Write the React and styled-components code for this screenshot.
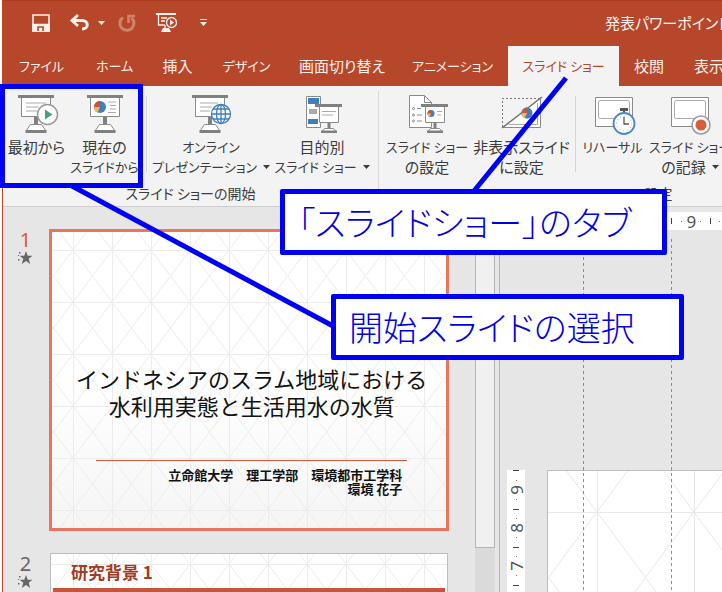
import React from 'react';
import styled, { createGlobalStyle } from 'styled-components';

const GlobalStyle = createGlobalStyle`
    * {
        box-sizing: border-box;
    }

    body {
        margin: 0;
        background: #fff;
        font-family: "Noto Sans CJK JP", "Noto Sans", sans-serif;
    }

    button {
        border: 0;
        padding: 0;
        background: none;
        color: inherit;
        font: inherit;
    }

    svg {
        display: block;
        overflow: visible;
    }
`

const Page = styled.div`
    position: relative;
    height: 100vh;
    overflow: hidden;
`

const Window = styled.div`
    display: flex;
    flex-direction: column;
    height: 100%;
    margin-left: 2px;
    border-left: 1px solid #b7472a;
    background: #e6e6e6;
    font-feature-settings: "palt";
`

const Header = styled.header`
    flex: none;
    overflow: hidden;
    border-top: 1px solid #b03a1e;
    background: #b7472a;
    color: #fdf1ec;
`

const TitleBar = styled.div`
    display: flex;
    align-items: center;
    height: 45px;
    padding: 0 0 2px 18px;
`

const QuickButton = styled.button`
    display: flex;
    flex: none;
    align-items: center;
    justify-content: center;
    width: ${({ $width }) => $width}px;
    height: 32px;
    opacity: ${({ disabled }) => (disabled ? 0.35 : 1)};
`

const FileName = styled.span`
    flex: none;
    width: 117px;
    margin-left: auto;
    font-size: 15px;
    white-space: nowrap;
`

const Tabs = styled.nav`
    display: flex;
    height: 40px;
`

const Tab = styled.button`
    flex: none;
    width: ${({ $width }) => $width}px;
    padding-bottom: 2px;
    background: ${({ $active }) => ($active ? '#f3f3f3' : 'none')};
    color: ${({ $active }) => ($active ? '#b7472a' : 'inherit')};
    font-size: ${({ $small }) => ($small ? 13 : 15)}px;
    white-space: nowrap;
`

const Ribbon = styled.div`
    display: flex;
    flex: none;
    height: 121px;
    padding: 5px 0 2px;
    overflow: hidden;
    border-bottom: 1px solid #cfcfcf;
    background: #f3f3f3;
    color: #3c3c3c;
`

const Group = styled.section`
    display: flex;
    flex: none;
    flex-direction: column;
    width: ${({ $width }) => $width}px;
    border-right: 1px solid #d8d8d8;
`

const GroupBody = styled.div`
    display: flex;
    flex: 1;
`

const GroupName = styled.div`
    height: 20px;
    font-size: 14px;
    line-height: 18px;
    text-align: center;
`

const Separator = styled.div`
    flex: none;
    width: 1px;
    height: 76px;
    margin: 5px 6px 0 7px;
    background: #d4d4d4;
`

const Command = styled.button`
    display: flex;
    flex: none;
    flex-direction: column;
    align-items: center;
    width: ${({ $width }) => $width}px;
    padding-top: 2px;
`

const CommandLine = styled.span`
    display: flex;
    align-items: center;
    gap: 6px;
    height: 20px;
    font-size: ${({ $small }) => ($small ? 13 : 15)}px;
    line-height: 20px;
    white-space: nowrap;
`

const IconBox = styled.span`
    height: 44px;
`

const Workspace = styled.main`
    display: flex;
    flex: 1;
    min-height: 0;
    overflow: hidden;
`

const ThumbnailPane = styled.aside`
    display: flex;
    flex: none;
    flex-direction: column;
    gap: 22px;
    width: 472px;
    padding: 22px 26px 0 9px;
`

const ThumbnailRow = styled.div`
    display: grid;
    flex: none;
    grid-template-columns: 27px 400px;
    gap: 10px;
`

const SlideMark = styled.div`
    display: flex;
    flex-direction: column;
    align-items: center;
    color: ${({ $active }) => ($active ? '#d9583b' : '#666')};
    font-family: "Noto Sans", sans-serif;
    font-size: 20px;
    line-height: 22px;
`

const Thumbnail = styled.div`
    display: grid;
    height: 302px;
    margin: ${({ $active }) => ($active ? '0' : '0 1px')};
    overflow: hidden;
    border: ${({ $active }) => ($active ? '3px solid #e7765a' : '1px solid #bdbdbd')};
    background: linear-gradient(#fff 50%, #f5f5f5);
    font-feature-settings: normal;

    > * {
        grid-area: 1 / 1;
    }
`

const CoverText = styled.div`
    padding: 133px 41px 0 24px;
    color: #111;
`

const CoverTitle = styled.h1`
    margin: 0 -20px 0 0;
    font-size: 22px;
    font-weight: 400;
    line-height: 27px;
    text-align: center;
    white-space: nowrap;
`

const Author = styled.p`
    margin: 41px 0 0 20px;
    padding: 7px 5px 0 0;
    border-top: 1px solid #c8583c;
    font-size: 13px;
    font-weight: 700;
    line-height: 14px;
    text-align: right;
    white-space: nowrap;
`

const SlideHeading = styled.h2`
    align-self: start;
    height: 38px;
    margin: 0 2px;
    padding: 0 18px;
    border-bottom: 4px solid #c8553a;
    color: #a23b22;
    font-size: 17px;
    font-weight: 700;
    line-height: 36px;
`

const ScrollTrack = styled.div`
    flex: none;
    width: 20px;
    background: #dadada;
`

const ScrollThumb = styled.div`
    height: 341px;
    border: 1px solid #b4b4b4;
    background: #f0f0f0;
`

const Editor = styled.div`
    position: relative;
    display: grid;
    flex: 1;
    grid-template-rows: 18px 1fr;
    min-width: 0;
    margin-left: 4px;
    padding-top: 5px;
    border-left: 1px solid #b4b4b4;
`

const Ruler = styled.div`
    display: flex;
    flex-direction: ${({ $vertical }) => ($vertical ? 'column' : 'row')};
    overflow: hidden;
    background: #fff;
    color: #555;
    font-family: "Noto Sans", sans-serif;
    font-size: 17px;
    line-height: 18px;
`

const TopRuler = styled(Ruler)`
    margin-left: 48px;
    padding-left: 123px;
`

const RulerUnit = styled.div`
    display: grid;
    flex: none;
    grid-template-columns: ${({ $vertical }) => ($vertical ? '18px' : 'repeat(4, minmax(0, 1fr))')};
    grid-template-rows: ${({ $vertical }) => ($vertical ? 'repeat(4, minmax(0, 1fr))' : '18px')};
    place-items: center;
    width: ${({ $vertical }) => ($vertical ? 18 : 38)}px;
    height: ${({ $vertical }) => ($vertical ? 38 : 18)}px;
`

const RulerNumber = styled.span`
    line-height: 1;
    writing-mode: ${({ $vertical }) => ($vertical ? 'sideways-lr' : 'horizontal-tb')};
`

const Tick = styled.i`
    flex: none;
    align-self: center;
    width: ${({ $vertical }) => ($vertical ? 6 : 1)}px;
    height: ${({ $vertical }) => ($vertical ? 1 : 6)}px;
    background: #444;
`

const FirstTick = styled(Tick)`
    margin: ${({ $vertical }) => ($vertical ? '0 0 5px' : '0 5px 0 0')};
`

const Dot = styled.i`
    width: 1px;
    height: 1px;
    background: #777;
`

const Canvas = styled.div`
    display: grid;
    grid-template-columns: 18px 1fr;
    gap: 22px;
    padding: 240px 0 0 7px;
    overflow: hidden;
`

const Slide = styled.div`
    overflow: hidden;
    border: 1px solid #bdbdbd;
    border-width: 1px 0 0 1px;
    background: #fff;
`

const Guide = styled.div`
    position: absolute;
    top: 32px;
    bottom: 0;
    left: ${({ $left }) => $left}px;
    width: 1px;
    background: repeating-linear-gradient(#8c8c8c 0 3px, transparent 3px 6px);
`

const Marker = styled.div`
    position: absolute;
    top: 84px;
    left: 0;
    width: 143px;
    height: 104px;
    border: 5px solid #0000f5;
`

const Leaders = styled.svg`
    position: absolute;
    inset: 0;
    width: 100%;
    height: 100%;
    pointer-events: none;
`

const Callout = styled.div`
    position: absolute;
    top: ${({ $top }) => $top}px;
    left: ${({ $left }) => $left}px;
    width: ${({ $width }) => $width}px;
    height: 66px;
    padding-left: 13px;
    border: 5px solid #0000f5;
    border-radius: 2px;
    background: #fff;
    color: #0000e0;
    font-feature-settings: "palt";
    font-size: 34px;
    font-weight: 300;
    line-height: 56px;
    white-space: nowrap;
`

function Caret() {
    return (
        <svg width="7" height="4" viewBox="0 0 7 4" fill="currentColor">
            <path d="M0 0H7L3.500 4Z" />
        </svg>
    );
}

function Star() {
    return (
        <svg width="15" height="14" viewBox="0 0 15 14" fill="#666">
            <path d="M8 0L9.700 4.800H14.500L10.700 7.800L12.200 13L8 10L3.800 13L5.300 7.800L1.600 4.800H6.300Z" />
            <path d="M1 1h1.500v1.500h-1.500zM0 4h1v1h-1zM0 8h1.500v1.500h-1.500z" />
        </svg>
    );
}

function Lattice({ id, width, height, x, y, color }) {
    return (
        <svg width="100%" height="100%">
            <defs>
                <pattern id={ id } x={ x } y={ y } width={ width } height={ height } patternUnits="userSpaceOnUse">
                    <path
                        d={ `M0 .5H${width}M.5 0V${height}M0 0L${width} ${height}M${width} 0L0 ${height}` }
                        stroke={ color }
                        fill="none"
                    />
                </pattern>
            </defs>
            <rect width="100%" height="100%" fill={ `url(#${id})` } />
        </svg>
    );
}

/* projector screen on a stand, 36 x 39 */
function Screen({ x, children }) {
    return (
        <g transform={ `translate(${x} 2)` }>
            <path d="M3.500 2V21.500H32.500V2" fill="#fff" stroke="#8a8a8a" />
            <path d="M0 0H36V3H0Z" fill="#808080" />
            <path d="M16 22H20V30H16Z" fill="#808080" />
            <path d="M12.500 29.500H23.500L28 36H8Z" fill="#fff" stroke="#8a8a8a" />
            <path d="M7.500 35H28.500V38H7.500Z" fill="#808080" />
            { children }
        </g>
    );
}

function SmallScreen({ x, children }) {
    return (
        <g transform={ `translate(${x} 11)` }>
            <path d="M4.500 2V18.500H23.500V2" fill="#fff" stroke="#8a8a8a" />
            <path d="M0 0H27V3H0Z" fill="#808080" />
            <path d="M12.500 19H15.500V25H12.500Z" fill="#808080" />
            <path d="M9.500 24.500H18.500L21.500 28H6.500Z" fill="#fff" stroke="#8a8a8a" />
            <path d="M6 26.500H22V29H6Z" fill="#808080" />
            { children }
        </g>
    );
}

function Pie({ x, y, r }) {
    return (
        <g transform={ `translate(${x} ${y}) scale(${r})` }>
            <circle r="1" fill="#3f7fbf" />
            <path d="M0 0V-1A1 1 0 0 0 -.7 .7Z" fill="#d2502e" />
            <path d="M0 0L-1 0A1 1 0 0 0 -.4 .92Z" fill="#efb65a" />
        </g>
    );
}

function Icon({ name }) {
    const icons = {
        begin: (
            <>
                <Screen x={ 2 }>
                    <path d="M8 8H28M8 12H21M8 16H19" stroke="#aaa" />
                </Screen>
                <circle cx="31.500" cy="21.500" r="10" fill="#fff" stroke="#999" strokeWidth="1.500" />
                <path d="M29 16.500V26.500L36.500 21.500Z" fill="#4e9f80" />
            </>
        ),
        current: (
            <Screen x={ 3 }>
                <Pie x={ 13 } y={ 12 } r={ 6 } />
                <path d="M21 7H29M23 10.500H29M23 14H29M21 17.500H29" stroke="#aaa" />
            </Screen>
        ),
        online: (
            <>
                <Screen x={ 2 }>
                    <path d="M8 8H26M8 12H20M8 16H18" stroke="#aaa" />
                </Screen>
                <g fill="none" stroke="#3c7fc0" strokeWidth="1.300">
                    <circle cx="31" cy="21" r="9.500" fill="#fff" />
                    <ellipse cx="31" cy="21" rx="4.500" ry="9.500" />
                    <path d="M31 11.500V30.500M21.500 21H40.500M23 16H39M23 26H39" />
                </g>
            </>
        ),
        custom: (
            <>
                <path d="M5.500 3.500H19.500V34.500H5.500Z" fill="#fff" stroke="#8a8a8a" />
                <path d="M7 5H18V11H7ZM7 26H17V31H7Z" fill="#3c7fc0" />
                <path d="M8 16H16V21H8Z" fill="#aaa" />
                <SmallScreen x={ 14 }>
                    <path d="M7 7.500H21M7 11H18" stroke="#aaa" />
                </SmallScreen>
            </>
        ),
        setup: (
            <>
                <path d="M3.500 2.500H18.500L25.500 9.500V34.500H3.500Z" fill="#fff" stroke="#8a8a8a" />
                <path d="M18.500 2.500V9.500H25.500M11 15.500H15M11 22H16M11 28H16" fill="none" stroke="#8a8a8a" />
                <g fill="none" stroke="#8a8a8a">
                    <circle cx="7.500" cy="15.500" r="1" />
                    <circle cx="7.500" cy="22" r="1" />
                    <circle cx="7.500" cy="28" r="1" />
                </g>
                <SmallScreen x={ 15 }>
                    <Pie x={ 10 } y={ 9.5 } r={ 3.5 } />
                    <path d="M16 7.500H21M16 11H20" stroke="#aaa" />
                </SmallScreen>
            </>
        ),
        hide: (
            <>
                <path d="M1.500 34V5.500H38" fill="none" stroke="#777" strokeDasharray="2 2" />
                <path d="M2 34.500H39.500V5Z" fill="#fff" stroke="#8a8a8a" />
                <path d="M8 31.500H36.500V10" fill="none" stroke="#aaa" />
                <Pie x={ 26 } y={ 20 } r={ 5.5 } />
                <path d="M1 35L41 4" stroke="#777" strokeWidth="1.500" />
            </>
        ),
        rehearse: (
            <>
                <path d="M3.500 4.500H40.500V33.500H3.500Z" fill="#fff" stroke="#8a8a8a" />
                <rect x="6.500" y="7.500" width="31" height="18" rx="2" fill="#fff" stroke="#aaa" />
                <path d="M28 15H36V18H33V20H31V18H28Z" fill="#555" />
                <circle cx="32" cy="30.500" r="10.500" fill="#fff" stroke="#4a86c4" strokeWidth="1.800" />
                <circle cx="32" cy="30.500" r="7.500" fill="none" stroke="#8ab0d8" strokeDasharray="1 2.900" />
                <path d="M32 24V31H37" fill="none" stroke="#555" strokeWidth="1.300" />
            </>
        ),
        record: (
            <>
                <path d="M2.500 4.500H39.500V33.500H2.500Z" fill="#fff" stroke="#8a8a8a" />
                <rect x="5.500" y="7.500" width="31" height="18" rx="2" fill="#fff" stroke="#aaa" />
                <circle cx="32" cy="32" r="9" fill="#fff" stroke="#999" strokeWidth="1.500" />
                <circle cx="32" cy="32" r="5.500" fill="#dc5a3c" />
            </>
        ),
    }

    return (
        <IconBox>
            <svg width="42" height="42" viewBox="0 0 42 42">{ icons[name] }</svg>
        </IconBox>
    );
}

function RibbonCommand({ icon, width, lines, small, menu }) {
    return (
        <Command type="button" $width={ width }>
            <Icon name={ icon } />
            { lines.map((line, i) => (
                <CommandLine key={ line } $small={ small.includes(i) }>
                    { line }
                    { menu && i === lines.length - 1 && <Caret /> }
                </CommandLine>
            )) }
        </Command>
    );
}

function Unit({ value, vertical }) {
    return (
        <RulerUnit $vertical={ vertical }>
            <Dot />
            <RulerNumber $vertical={ vertical }>{ value }</RulerNumber>
            <Dot />
            <Tick $vertical={ vertical } />
        </RulerUnit>
    );
}

const tabs = [
    { text: 'ファイル', width: 77, small: true },
    { text: 'ホーム', width: 69, small: true },
    { text: '挿入', width: 57 },
    { text: 'デザイン', width: 81, small: true },
    { text: '画面切り替え', width: 110 },
    { text: 'アニメーション', width: 111, small: true },
    { text: 'スライド ショー', width: 111, active: true, small: true },
    { text: '校閲', width: 60 },
    { text: '表示', width: 60 },
]

function App() {
    return (
        <Page>
            <GlobalStyle />
            <Window>
                <Header>
                    <TitleBar>
                        <QuickButton type="button" aria-label="上書き保存" $width={ 40 }>
                            <svg width="18" height="18" viewBox="0 0 18 18" fill="none" stroke="currentColor" strokeWidth="1.600">
                                <path d="M1 1H17V17H1Z" />
                                <path d="M1 10.500H17V17H1Z" fill="currentColor" />
                                <path d="M6 17V13H11V17" stroke="#b7472a" />
                            </svg>
                        </QuickButton>
                        <QuickButton type="button" aria-label="元に戻す" $width={ 36 }>
                            <svg width="19" height="17" viewBox="0 0 19 17" fill="none" stroke="currentColor" strokeWidth="3">
                                <path d="M8 1L2 6.500L8 12" strokeWidth="2.800" />
                                <path d="M2 6.500H12C19 6.500 19 15 12 15" />
                            </svg>
                        </QuickButton>
                        <QuickButton type="button" aria-label="元に戻す一覧" $width={ 8 }><Caret /></QuickButton>
                        <QuickButton type="button" aria-label="繰り返し" disabled $width={ 43 }>
                            <svg width="18" height="18" viewBox="0 0 18 18" fill="none" stroke="currentColor" strokeWidth="3">
                                <path d="M5 3.500A7 7 0 1 0 13.500 4" />
                                <path d="M10.500 9V2H17" strokeWidth="2.600" />
                            </svg>
                        </QuickButton>
                        <QuickButton type="button" aria-label="先頭から開始" $width={ 36 }>
                            <svg width="21" height="20" viewBox="0 0 21 20" fill="none" stroke="currentColor" strokeWidth="1.300">
                                <path d="M0 1H20" strokeWidth="2" />
                                <path d="M2.500 1V12H9M5 5H11M5 8H9M9 12V16" />
                                <path d="M7 15H13L15 19H5Z" fill="currentColor" stroke="none" />
                                <circle cx="15.500" cy="9.500" r="5" />
                                <path d="M14 6.500V12.500L18 9.500Z" fill="currentColor" stroke="none" />
                            </svg>
                        </QuickButton>
                        <QuickButton type="button" aria-label="カスタマイズ" $width={ 38 }>
                            <svg width="7" height="7" viewBox="0 0 7 7" fill="currentColor">
                                <path d="M0 0H7V1H0ZM0 3H7L3.500 7Z" />
                            </svg>
                        </QuickButton>
                        <FileName>発表パワーポイント</FileName>
                    </TitleBar>
                    <Tabs>
                        { tabs.map(({ text, width, active, small }) => (
                            <Tab key={ text } type="button" $width={ width } $active={ active } $small={ small }>{ text }</Tab>
                        )) }
                    </Tabs>
                </Header>

                <Ribbon>
                    <Group $width={ 376 }>
                        <GroupBody>
                            <RibbonCommand icon="begin" width={ 67 } lines={ ['最初から'] } small={ [] } />
                            <RibbonCommand icon="current" width={ 69 } lines={ ['現在の', 'スライドから'] } small={ [1] } />
                            <Separator />
                            <RibbonCommand icon="online" width={ 116 } lines={ ['オンライン', 'プレゼンテーション'] } small={ [0, 1] } menu />
                            <RibbonCommand icon="custom" width={ 106 } lines={ ['目的別', 'スライド ショー'] } small={ [1] } menu />
                        </GroupBody>
                        <GroupName>スライド ショーの開始</GroupName>
                    </Group>
                    <Group $width={ 560 }>
                        <GroupBody>
                            <RibbonCommand icon="setup" width={ 96 } lines={ ['スライド ショー', 'の設定'] } small={ [0] } />
                            <RibbonCommand icon="hide" width={ 93 } lines={ ['非表示スライド', 'に設定'] } small={ [] } />
                            <Separator />
                            <RibbonCommand icon="rehearse" width={ 61 } lines={ ['リハーサル'] } small={ [0] } />
                            <RibbonCommand icon="record" width={ 94 } lines={ ['スライド ショー', 'の記録'] } small={ [0] } menu />
                        </GroupBody>
                        <GroupName>設定</GroupName>
                    </Group>
                </Ribbon>

                <Workspace>
                    <ThumbnailPane>
                        <ThumbnailRow>
                            <SlideMark $active>1<Star /></SlideMark>
                            <Thumbnail $active>
                                <Lattice id="cover" x={ 21 } y={ 18 } width={ 39 } height={ 52 } color="#ececec" />
                                <CoverText>
                                    <CoverTitle>インドネシアのスラム地域における<br />水利用実態と生活用水の水質</CoverTitle>
                                    <Author>立命館大学　理工学部　環境都市工学科<br />環境 花子</Author>
                                </CoverText>
                            </Thumbnail>
                        </ThumbnailRow>
                        <ThumbnailRow>
                            <SlideMark>2<Star /></SlideMark>
                            <Thumbnail>
                                <Lattice id="second" x={ 22 } y={ 10 } width={ 39 } height={ 52 } color="#ececec" />
                                <SlideHeading>研究背景 1</SlideHeading>
                            </Thumbnail>
                        </ThumbnailRow>
                    </ThumbnailPane>
                    <ScrollTrack>
                        <ScrollThumb />
                    </ScrollTrack>
                    <Editor>
                        <TopRuler>
                            <FirstTick />
                            <Unit value={ 9 } />
                            <Unit value={ 8 } />
                        </TopRuler>
                        <Canvas>
                            <Ruler $vertical>
                                <FirstTick $vertical />
                                <Unit value={ 9 } vertical />
                                <Unit value={ 8 } vertical />
                                <Unit value={ 7 } vertical />
                            </Ruler>
                            <Slide>
                                <Lattice id="slide" x={ 49 } y={ 41 } width={ 97 } height={ 131 } color="#e8e8e8" />
                            </Slide>
                        </Canvas>
                        <Guide $left={ 83 } />
                        <Guide $left={ 171 } />
                    </Editor>
                </Workspace>
            </Window>

            <Marker />
            <Leaders stroke="#0000f5" strokeWidth="5">
                <path d="M72 186L333 326M566 78L474 191" />
            </Leaders>
            <Callout $top={ 189 } $left={ 280 } $width={ 387 }>「スライドショー」のタブ</Callout>
            <Callout $top={ 294 } $left={ 331 } $width={ 353 }>開始スライドの選択</Callout>
        </Page>
    );
}

export default App;
